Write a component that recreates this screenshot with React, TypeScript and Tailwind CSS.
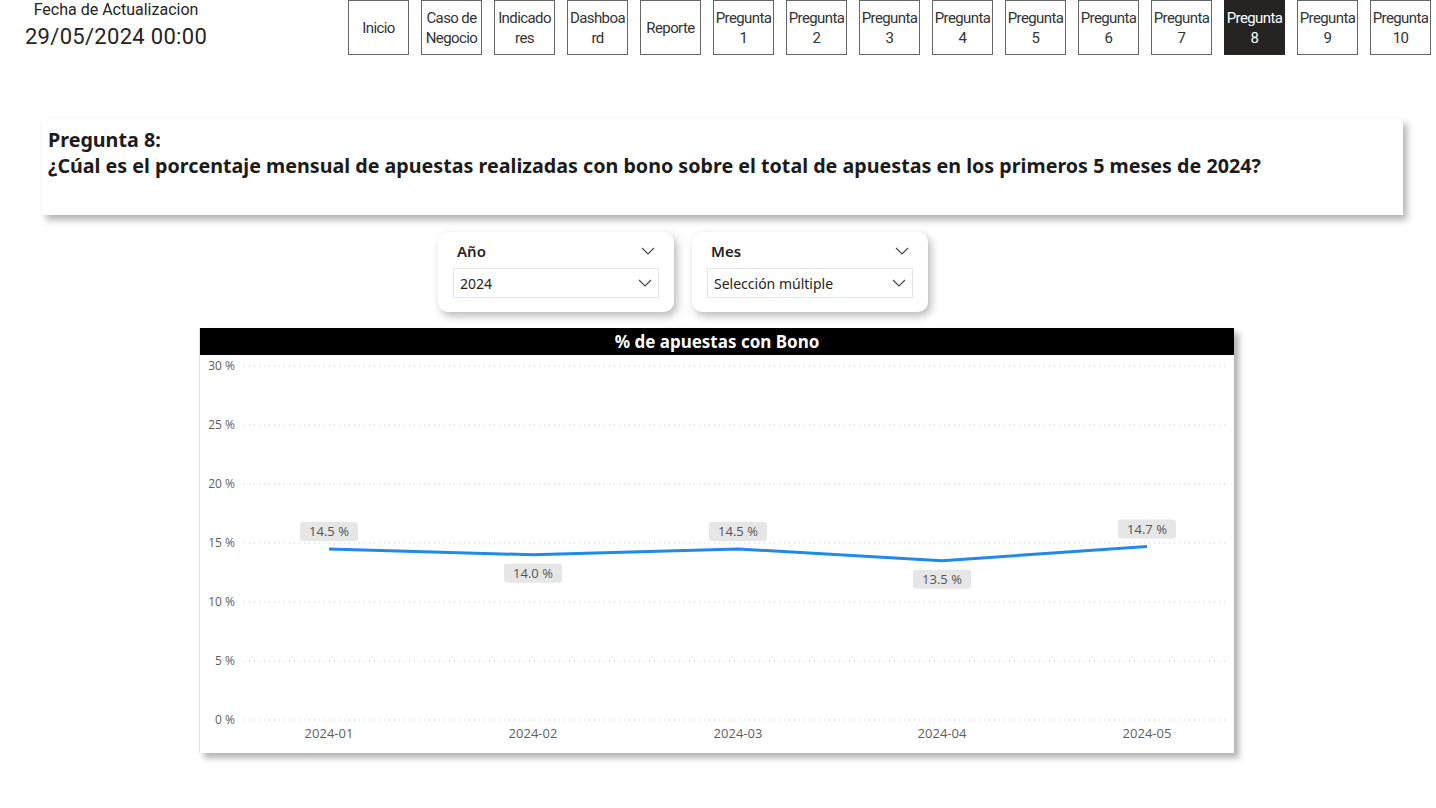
import React from "react";

const navItems: { l1: string; l2?: string; active?: boolean }[] = [
  { l1: "Inicio" },
  { l1: "Caso de", l2: "Negocio" },
  { l1: "Indicado", l2: "res" },
  { l1: "Dashboa", l2: "rd" },
  { l1: "Reporte" },
  { l1: "Pregunta", l2: "1" },
  { l1: "Pregunta", l2: "2" },
  { l1: "Pregunta", l2: "3" },
  { l1: "Pregunta", l2: "4" },
  { l1: "Pregunta", l2: "5" },
  { l1: "Pregunta", l2: "6" },
  { l1: "Pregunta", l2: "7" },
  { l1: "Pregunta", l2: "8", active: true },
  { l1: "Pregunta", l2: "9" },
  { l1: "Pregunta", l2: "10" },
];

const Chevron = ({ className = "" }: { className?: string }) => (
  <svg width="14" height="8" viewBox="0 0 14 8" className={className}>
    <path d="M1 1 L7 7 L13 1" fill="none" stroke="#444" strokeWidth="1.1" />
  </svg>
);

function Slicer({ title, value }: { title: string; value: string }) {
  return (
    <div className="w-[236px] h-[80px] bg-white rounded-[10px] shadow-[3px_4px_8px_rgba(0,0,0,0.28)] px-[15px] pt-[9px]">
      <div className="flex items-center justify-between pl-[4px] pr-[4px] h-[20px]">
        <span className="text-[15px] font-semibold text-[#252423]" style={{ fontFamily: '"Noto Sans", sans-serif' }}>
          {title}
        </span>
        <Chevron />
      </div>
      <div className="mt-[7px] h-[30px] border border-[#e6e6e6] flex items-center justify-between pl-[6px] pr-[6px]">
        <span className="text-[14px] leading-[20px] mt-[2px] text-[#252423]" style={{ fontFamily: '"Noto Sans", sans-serif' }}>
          {value}
        </span>
        <Chevron />
      </div>
    </div>
  );
}

function Chart() {
  const ticks = [30, 25, 20, 15, 10, 5, 0];
  const yOf = (v: number) => 365 - v * 11.8;
  const xs = [129, 333, 538, 742, 947];
  const months = ["2024-01", "2024-02", "2024-03", "2024-04", "2024-05"];
  const vals = [14.5, 14.0, 14.5, 13.5, 14.7];
  const above = [true, false, true, false, true];
  const pts = vals.map((v, i) => `${xs[i]},${yOf(v)}`).join(" ");
  return (
    <svg width="1035" height="398" className="block" style={{ fontFamily: '"Open Sans", sans-serif' }}>
      {ticks.map((t) => (
        <g key={t}>
          <line x1="44" x2="1026" y1={yOf(t)} y2={yOf(t)} stroke="#c8c8c8" strokeWidth="1" strokeDasharray="1 4" />
          <text x="35" y={yOf(t) + 4} textAnchor="end" fontSize="12" fill="#605e5c">
            {t} %
          </text>
        </g>
      ))}
      {months.map((m, i) => (
        <text key={m} x={xs[i]} y="383" textAnchor="middle" fontSize="13" fill="#605e5c">
          {m}
        </text>
      ))}
      <polyline points={pts} fill="none" stroke="#1f8ae8" strokeWidth="3" strokeLinejoin="round" />
      {vals.map((v, i) => {
        const y = yOf(v);
        const by = above[i] ? y - 27 : y + 9;
        return (
          <g key={i}>
            <rect x={xs[i] - 29} y={by} width="58" height="19" rx="3" fill="#e6e6e6" />
            <text x={xs[i]} y={by + 14} textAnchor="middle" fontSize="13" fill="#555">
              {v.toFixed(1)} %
            </text>
          </g>
        );
      })}
    </svg>
  );
}

export default function App() {
  return (
    <div className="w-[1436px] h-[808px] bg-white overflow-hidden relative">
      {/* Header */}
      <div className="flex h-[55px]">
        <div className="w-[200px] ml-[16px] flex flex-col items-center" style={{ fontFamily: 'Roboto, sans-serif' }}>
          <div className="text-[16px] leading-[18px] mt-[1px] text-[#252423]">Fecha de Actualizacion</div>
          <div className="text-[22px] leading-[28px] mt-[4px] text-[#252423] tracking-[0.3px]">29/05/2024 00:00</div>
        </div>
        <div className="ml-[132px] flex gap-[12px]">
          {navItems.map((n, i) => (
            <div
              key={i}
              className={`w-[61px] h-[55px] border flex flex-col items-center justify-center text-[15px] leading-[20px] tracking-[-0.6px] ${
                n.active ? "bg-[#252423] text-white border-[#252423]" : "bg-white text-[#333] border-[#666]"
              }`}
              style={{ fontFamily: 'Roboto, sans-serif' }}
            >
              <span className="whitespace-nowrap">{n.l1}</span>
              {n.l2 && <span>{n.l2}</span>}
            </div>
          ))}
        </div>
      </div>

      {/* Question card */}
      <div className="ml-[42px] mt-[64px] w-[1361px] h-[96px] bg-white shadow-[4px_5px_7px_rgba(0,0,0,0.3)] pl-[6px] pt-[8px]">
        <div className="text-[19.7px] leading-[26px] font-bold text-[#1b1b1b]" style={{ fontFamily: '"Noto Sans", sans-serif' }}>
          <div>Pregunta 8:</div>
          <div className="whitespace-nowrap">¿Cúal es el porcentaje mensual de apuestas realizadas con bono sobre el total de apuestas en los primeros 5 meses de 2024?</div>
        </div>
      </div>

      {/* Slicers */}
      <div className="ml-[438px] mt-[17px] flex gap-[18px]">
        <Slicer title="Año" value="2024" />
        <Slicer title="Mes" value="Selección múltiple" />
      </div>

      {/* Chart */}
      <div className="ml-[199px] mt-[16px] w-[1035px] h-[425px] bg-white border-l border-[#e0e0e0] shadow-[5px_5px_6px_rgba(0,0,0,0.3)]">
        <div
          className="h-[27px] bg-black text-white flex items-center justify-center text-[17px] font-bold"
          style={{ fontFamily: '"Noto Sans", sans-serif' }}
        >
          % de apuestas con Bono
        </div>
        <Chart />
      </div>
    </div>
  );
}
